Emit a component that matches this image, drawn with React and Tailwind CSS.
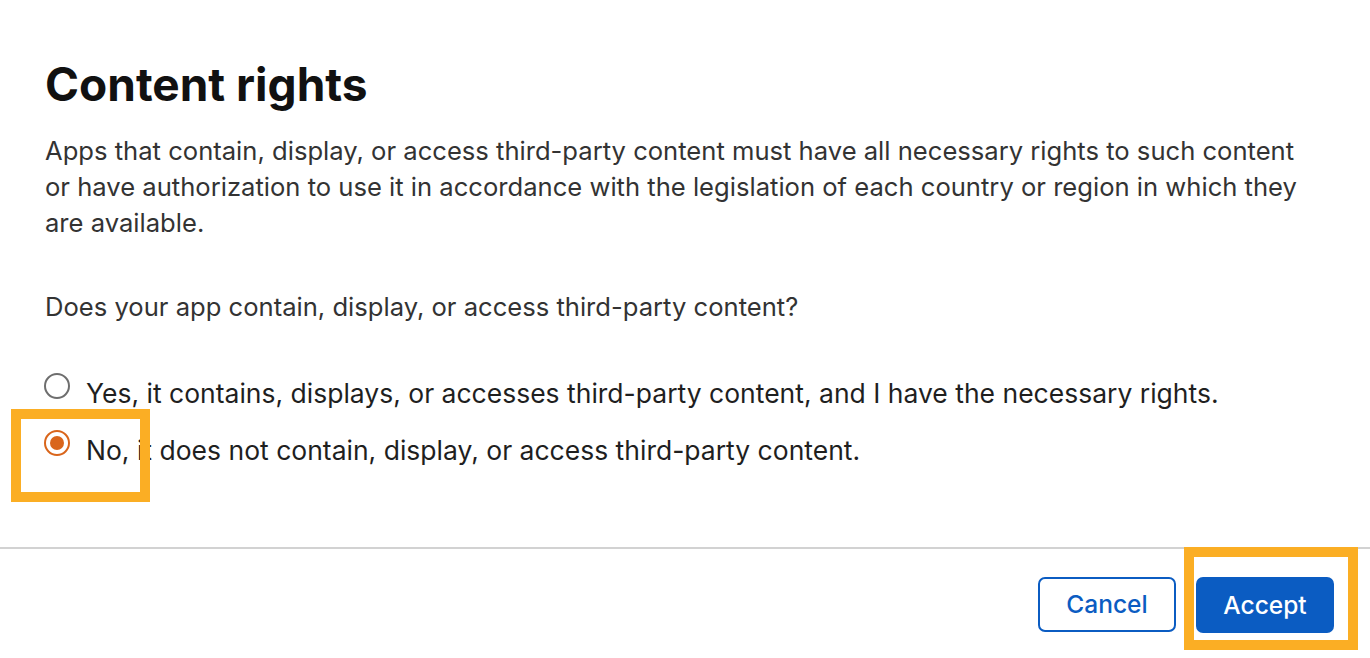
import { useState } from 'react'

const OPTIONS = [
  { id: 'yes', label: 'Yes, it contains, displays, or accesses third-party content, and I have the necessary rights.' },
  { id: 'no', label: 'No, it does not contain, display, or access third-party content.' },
]

function Radio({ checked }) {
  return checked ? (
    <span className="block w-[26px] h-[26px] rounded-full border-2 border-[#d9651b] flex items-center justify-center flex-shrink-0 -mt-[2px]">
      <span className="block w-[14px] h-[14px] rounded-full bg-[#d9651b]" />
    </span>
  ) : (
    <span className="block w-[26px] h-[26px] rounded-full border-2 border-[#6e6e6e] flex-shrink-0 -mt-[2px]" />
  )
}

export default function App() {
  const [choice, setChoice] = useState('no')

  return (
    <div className="relative w-[1370px] h-[658px] bg-white overflow-hidden font-['Inter',sans-serif] text-[#333]">
      <div className="px-[45px] pt-[54px]">
        <h1 className="text-[46px] leading-[60px] font-bold text-[#111]">Content rights</h1>
        <p className="mt-[19px] w-[1270px] text-[25.6px] leading-[36px]">
          Apps that contain, display, or access third-party content must have all necessary rights to such content
          or have authorization to use it in accordance with the legislation of each country or region in which they
          are available.
        </p>
        <p className="mt-[48px] text-[25.6px] leading-[36px]">Does your app contain, display, or access third-party content?</p>

        <div className="mt-[50px] -ml-[1px] flex flex-col gap-[21px]">
          {OPTIONS.map((o) => (
            <button
              key={o.id}
              onClick={() => setChoice(o.id)}
              className="flex items-start gap-[16px] text-left"
            >
              <Radio checked={choice === o.id} />
              <span className="text-[26.5px] leading-[36px] text-[#1f1f1f]">{o.label}</span>
            </button>
          ))}
        </div>
      </div>

      <div className="absolute left-0 right-0 top-[547px] border-t-2 border-[#d2d2d2]" />

      <div className="absolute right-[36px] top-[577px] flex gap-[20px]">
        <button className="w-[138px] h-[55px] rounded-[7px] border-2 border-[#0b5cc2] text-[#0b5cc2] text-[24.5px] font-medium">
          Cancel
        </button>
        <button className="w-[138px] h-[56px] rounded-[7px] bg-[#0b5cc2] text-white text-[24.5px] font-medium">
          Accept
        </button>
      </div>

      {/* annotation highlights */}
      <div className="absolute left-[11px] top-[409px] w-[139px] h-[93px] border-[10px] border-[#fbae24] pointer-events-none" />
      <div className="absolute left-[1184px] top-[547px] w-[174px] h-[103px] border-[10px] border-[#fbae24] pointer-events-none" />
    </div>
  )
}
